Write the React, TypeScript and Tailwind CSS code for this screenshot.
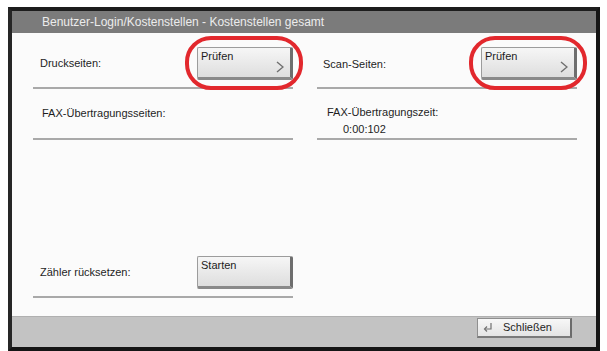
const font = { fontFamily: '"Liberation Sans", Arial, sans-serif' };

const Chevron = () => (
  <svg width="8" height="12" viewBox="0 0 8 12" className="absolute right-[6px] bottom-[4px]">
    <polyline points="1,1 7,6 1,11" fill="none" stroke="#6f6f6f" strokeWidth="1.4" />
  </svg>
);

const PanelButton = ({ label, chevron, ring }: { label: string; chevron?: boolean; ring?: boolean }) => (
  <div className="relative w-[96px] h-[33px] shrink-0">
    <div className="relative w-full h-full bg-gradient-to-b from-[#f6f6f6] to-[#dedede] border border-[#9c9c9c] border-r-[3px] border-r-[#6e6e6e] border-b-[3px] border-b-[#8a8a8a] rounded-[2px]">
      <span className="absolute left-[3px] top-[2px] text-[11px] text-[#1c1c1c] leading-[13px]">{label}</span>
      {chevron && <Chevron />}
    </div>
    {ring && (
      <div className="absolute -left-[12px] -right-[10px] -top-[11px] -bottom-[10px] rounded-[26px] border-4 border-[#e2282d]" />
    )}
  </div>
);

export default function App() {
  return (
    <div className="w-[607px] h-[351px] bg-white pt-[7px] pl-[8px]" style={font}>
      <div className="w-[592px] h-[344px] flex flex-col border-4 border-[#151515] border-t-[#1d1d1d] border-l-[#262626]">
        <div className="h-[22px] bg-[#7b7b7b] flex items-center pl-[30px] text-[12px] text-[#ececec]">
          Benutzer-Login/Kostenstellen - Kostenstellen gesamt
        </div>

        <div className="flex-1 bg-[#fbfbfb] flex flex-col pl-[21px] text-[11px] text-[#1e1e1e]">
          <div className="grid grid-cols-[260px_260px] gap-x-[24px]">
            <div className="h-[56px] pt-[14px] border-b-2 border-[#a9a9a9] flex items-start justify-between">
              <span className="pl-[7px] pt-[8px]">Druckseiten:</span>
              <PanelButton label="Prüfen" chevron ring />
            </div>
            <div className="h-[56px] pt-[14px] border-b-2 border-[#a9a9a9] flex items-start justify-between">
              <span className="pl-[6px] pt-[9px]">Scan-Seiten:</span>
              <PanelButton label="Prüfen" chevron ring />
            </div>

            <div className="h-[51px] pt-[16px] border-b-2 border-[#a9a9a9]">
              <span className="pl-[9px]">FAX-Übertragungsseiten:</span>
            </div>
            <div className="h-[51px] pt-[16px] border-b-2 border-[#a9a9a9] flex flex-col">
              <span className="pl-[10px] leading-[14px]">FAX-Übertragungszeit:</span>
              <span className="pl-[26px] pt-[3px] leading-[14px]">0:00:102</span>
            </div>
          </div>

          <div className="flex-1" />

          <div className="w-[260px] h-[42px] border-b-2 border-[#a9a9a9] flex items-start justify-between mb-[18px]">
            <span className="pl-[7px] pt-[8px]">Zähler rücksetzen:</span>
            <PanelButton label="Starten" />
          </div>
        </div>

        <div className="h-[31px] bg-[#c3c3c3] border-t border-[#b0b0b0] flex items-start justify-end pr-[24px] pt-[1px]">
          <div className="w-[95px] h-[20px] bg-gradient-to-b from-[#f7f7f7] to-[#e4e4e4] border border-[#8f8f8f] border-r-2 border-r-[#6c6c6c] border-b-2 border-b-[#7a7a7a] flex items-center text-[11px] text-[#1e1e1e]">
            <svg width="10" height="9" viewBox="0 0 10 9" className="ml-[5px]">
              <polyline points="8,0 8,6 2,6" fill="none" stroke="#707070" strokeWidth="1.2" />
              <polyline points="4,3.5 1.5,6 4,8.5" fill="none" stroke="#707070" strokeWidth="1.2" />
            </svg>
            <span className="ml-[10px]">Schließen</span>
          </div>
        </div>
      </div>
    </div>
  );
}
